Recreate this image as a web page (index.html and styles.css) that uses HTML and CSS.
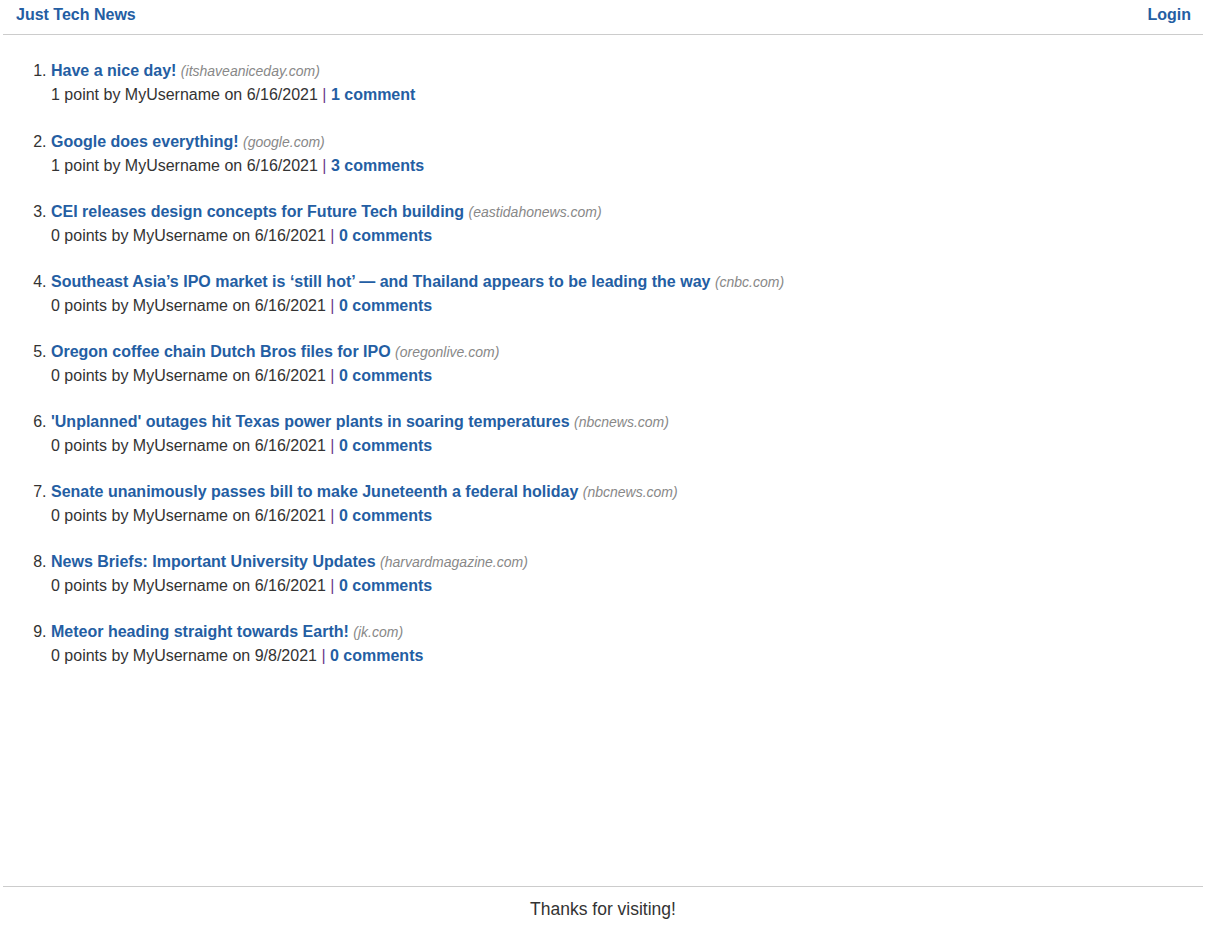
FILE: index.html
```html
<!DOCTYPE html>
<html lang="en">
<head>
<meta charset="UTF-8">
<meta name="viewport" content="width=device-width, initial-scale=1.0">
<title>Just Tech News</title>
<link rel="stylesheet" href="styles.css">
</head>
<body>
<div class="page">
  <div class="header">
    <a href="#" class="brand">Just Tech News</a>
    <a href="#" class="login">Login</a>
  </div>

  <div class="main">
    <ol class="posts">
      <li>
        <a href="#" class="title">Have a nice day!</a> <span class="domain">(itshaveaniceday.com)</span>
        <div class="meta">1 point by MyUsername on 6/16/2021 <span class="sep">|</span> <a href="#">1 comment</a></div>
      </li>
      <li>
        <a href="#" class="title">Google does everything!</a> <span class="domain">(google.com)</span>
        <div class="meta">1 point by MyUsername on 6/16/2021 <span class="sep">|</span> <a href="#">3 comments</a></div>
      </li>
      <li>
        <a href="#" class="title">CEI releases design concepts for Future Tech building</a> <span class="domain">(eastidahonews.com)</span>
        <div class="meta">0 points by MyUsername on 6/16/2021 <span class="sep">|</span> <a href="#">0 comments</a></div>
      </li>
      <li>
        <a href="#" class="title">Southeast Asia’s IPO market is ‘still hot’ — and Thailand appears to be leading the way</a> <span class="domain">(cnbc.com)</span>
        <div class="meta">0 points by MyUsername on 6/16/2021 <span class="sep">|</span> <a href="#">0 comments</a></div>
      </li>
      <li>
        <a href="#" class="title">Oregon coffee chain Dutch Bros files for IPO</a> <span class="domain">(oregonlive.com)</span>
        <div class="meta">0 points by MyUsername on 6/16/2021 <span class="sep">|</span> <a href="#">0 comments</a></div>
      </li>
      <li>
        <a href="#" class="title">'Unplanned' outages hit Texas power plants in soaring temperatures</a> <span class="domain">(nbcnews.com)</span>
        <div class="meta">0 points by MyUsername on 6/16/2021 <span class="sep">|</span> <a href="#">0 comments</a></div>
      </li>
      <li>
        <a href="#" class="title">Senate unanimously passes bill to make Juneteenth a federal holiday</a> <span class="domain">(nbcnews.com)</span>
        <div class="meta">0 points by MyUsername on 6/16/2021 <span class="sep">|</span> <a href="#">0 comments</a></div>
      </li>
      <li>
        <a href="#" class="title">News Briefs: Important University Updates</a> <span class="domain">(harvardmagazine.com)</span>
        <div class="meta">0 points by MyUsername on 6/16/2021 <span class="sep">|</span> <a href="#">0 comments</a></div>
      </li>
      <li>
        <a href="#" class="title">Meteor heading straight towards Earth!</a> <span class="domain">(jk.com)</span>
        <div class="meta">0 points by MyUsername on 9/8/2021 <span class="sep">|</span> <a href="#">0 comments</a></div>
      </li>
    </ol>
  </div>

  <div class="footer">Thanks for visiting!</div>
</div>
</body>
</html>
```

FILE: styles.css
```css
body {
  margin: 0;
  padding: 0;
  font-family: "Liberation Sans", Arial, sans-serif;
  font-size: 16px;
  line-height: 1.5;
  color: #333;
  background-color: #fff;
}
a {
  color: #245ea3;
  font-weight: bold;
  text-decoration: none;
}
.page {
  width: 1200px;
  margin-left: 3px;
  min-height: 100vh;
  display: flex;
  flex-direction: column;
}
.header {
  display: flex;
  justify-content: space-between;
  padding: 3px 12px 7px 13px;
  border-bottom: 1px solid #ccc;
}
.main {
  flex: 1;
  padding: 24px 8px 0;
}
.posts {
  margin: 0;
  padding-left: 40px;
}
.posts li {
  margin-bottom: 22px;
}
.posts li:first-child {
  margin-bottom: 23px;
}
.domain {
  font-size: 14px;
  font-style: italic;
  color: #888;
}
.sep {
  color: #6b3a8c;
}
.footer {
  border-top: 1px solid #ccc;
  padding: 10px 0 11px;
  text-align: center;
  font-size: 17.5px;
  line-height: 24px;
}
```
